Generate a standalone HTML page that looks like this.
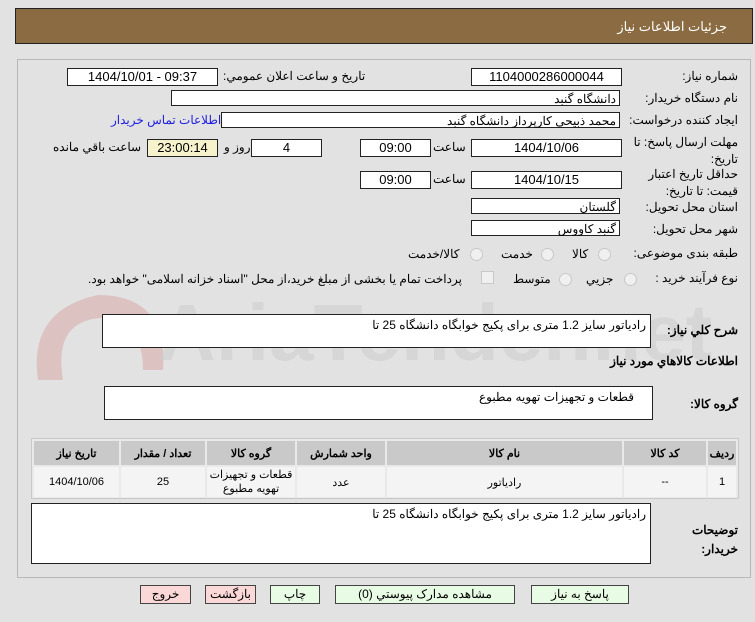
<!DOCTYPE html>
<html><head><meta charset="utf-8">
<style>
body{margin:0;width:755px;height:622px;background:#e2e2e2;font-family:"Liberation Sans","Noto Sans CJK SC",sans-serif;font-size:12px;color:#000;position:relative;overflow:hidden}
.a{position:absolute}
.hdr{left:15px;top:8px;width:736px;height:34px;background:#8b6b41;border:1px solid #222}
.hdr span{position:absolute;right:25px;top:10px;color:#fff;font-size:13px}
.panel{left:17px;top:59px;width:732px;height:517px;border:1px solid #b8b8b8;background:#e2e2e2}
.box{position:absolute;background:#fff;border:1px solid #222;height:16px;line-height:16px;text-align:center;font-size:13px}
.r{text-align:right;padding-right:3px;box-sizing:border-box;direction:rtl;font-size:12px}
.lbl{position:absolute;direction:rtl;text-align:right;white-space:nowrap}
.rad{position:absolute;width:11px;height:11px;border-radius:50%;border:1px solid #c8c8c8;background:#f0f0f0}
.ta{position:absolute;background:#fff;border:1px solid #222;direction:rtl;text-align:right;padding:3px 4px;box-sizing:border-box}
table{border-collapse:separate;border-spacing:2px;font-size:11px}
th{background:#c9c9c9;height:22px;font-weight:bold}
td{background:#f4f4f4;text-align:center;height:26px}
.btn{position:absolute;top:585px;height:17px;border:1px solid #444;background:#e8fbe4;text-align:center;line-height:17px;font-size:12px;direction:rtl}
</style></head><body>
<div class="a hdr"><span>جزئیات اطلاعات نیاز</span></div>
<div class="a panel"></div>
<svg class="a" style="left:18px;top:250px" width="720" height="150"><g fill="#d9a8a8" opacity="0.55"><path d="M20 130 Q10 60 80 45 Q150 45 145 120 L125 120 Q125 70 82 68 Q35 72 45 130 Z"/></g><text x="140" y="110" font-size="80" font-family="Liberation Sans" font-weight="bold" fill="#cfcfcf" opacity="0.6">AriaTender.net</text></svg>

<div class="lbl" style="right:17px;top:69px">شماره نیاز:</div>
<div class="box" style="left:471px;top:68px;width:149px">1104000286000044</div>
<div class="lbl" style="left:223px;top:69px">تاريخ و ساعت اعلان عمومي:</div>
<div class="box" style="left:67px;top:68px;width:149px">1404/10/01 - 09:37</div>

<div class="lbl" style="right:17px;top:91px">نام دستگاه خریدار:</div>
<div class="box r" style="left:171px;top:90px;width:449px">دانشگاه گنبد</div>

<div class="lbl" style="right:17px;top:113px">ایجاد کننده درخواست:</div>
<div class="box r" style="left:221px;top:112px;width:399px">محمد ذبیحی کارپرداز دانشگاه گنبد</div>
<div class="lbl" style="left:111px;top:113px;color:#2020e0">اطلاعات تماس خریدار</div>

<div class="lbl" style="right:17px;top:134px;line-height:17px">مهلت ارسال پاسخ: تا<br>تاریخ:</div>
<div class="box" style="left:471px;top:139px;width:149px">1404/10/06</div>
<div class="lbl" style="left:433px;top:140px">ساعت</div>
<div class="box" style="left:360px;top:139px;width:69px">09:00</div>
<div class="box" style="left:251px;top:139px;width:69px">4</div>
<div class="lbl" style="left:224px;top:140px">روز و</div>
<div class="box" style="left:147px;top:139px;width:69px;background:#f5f2cc">23:00:14</div>
<div class="lbl" style="left:53px;top:140px">ساعت باقي مانده</div>

<div class="lbl" style="right:17px;top:166px;line-height:17px">حداقل تاریخ اعتبار<br>قیمت: تا تاریخ:</div>
<div class="box" style="left:471px;top:171px;width:149px">1404/10/15</div>
<div class="lbl" style="left:433px;top:172px">ساعت</div>
<div class="box" style="left:360px;top:171px;width:69px">09:00</div>

<div class="lbl" style="right:17px;top:200px">استان محل تحویل:</div>
<div class="box r" style="left:471px;top:198px;width:149px">گلستان</div>
<div class="lbl" style="right:17px;top:222px">شهر محل تحویل:</div>
<div class="box r" style="left:471px;top:220px;width:149px">گنبد کاووس</div>

<div class="lbl" style="right:17px;top:246px">طبقه بندی موضوعی:</div>
<div class="rad" style="left:598px;top:248px"></div><div class="lbl" style="left:572px;top:247px">کالا</div>
<div class="rad" style="left:541px;top:248px"></div><div class="lbl" style="left:501px;top:247px">خدمت</div>
<div class="rad" style="left:470px;top:248px"></div><div class="lbl" style="left:408px;top:247px">کالا/خدمت</div>

<div class="lbl" style="right:17px;top:271px">نوع فرآیند خرید :</div>
<div class="rad" style="left:624px;top:273px"></div><div class="lbl" style="left:586px;top:272px">جزیي</div>
<div class="rad" style="left:559px;top:273px"></div><div class="lbl" style="left:513px;top:272px">متوسط</div>
<div class="a" style="left:481px;top:271px;width:11px;height:11px;border:1px solid #c8c8c8;background:#f0f0f0"></div>
<div class="lbl" style="left:88px;top:272px">پرداخت تمام یا بخشی از مبلغ خرید،از محل "اسناد خزانه اسلامی" خواهد بود.</div>

<div class="lbl" style="right:17px;top:323px;font-weight:bold">شرح کلي نیاز:</div>
<div class="ta" style="left:102px;top:314px;width:549px;height:34px">رادیاتور سایز 1.2 متری برای پکیج خوابگاه دانشگاه 25 تا</div>
<div class="lbl" style="right:17px;top:354px;font-weight:bold">اطلاعات کالاهاي مورد نیاز</div>
<div class="lbl" style="right:17px;top:397px;font-weight:bold">گروه کالا:</div>
<div class="ta" style="left:104px;top:386px;width:549px;height:34px;padding-right:18px">قطعات و تجهیزات تهویه مطبوع</div>

<div class="a" style="left:31px;top:438px;width:706px;height:59px;border:1px solid #c8c8c8;background:#e9e9e9">
<table style="direction:rtl;width:706px">
<tr><th style="width:26px">ردیف</th><th style="width:80px">کد کالا</th><th style="width:233px">نام کالا</th><th style="width:86px">واحد شمارش</th><th style="width:86px">گروه کالا</th><th style="width:82px">تعداد / مقدار</th><th>تاریخ نیاز</th></tr>
<tr><td>1</td><td>--</td><td>رادیاتور</td><td>عدد</td><td style="line-height:14px;font-size:11px">قطعات و تجهیزات<br>تهویه مطبوع</td><td>25</td><td>1404/10/06</td></tr>
</table></div>

<div class="lbl" style="right:17px;top:521px;font-weight:bold;line-height:19px">توضیحات<br>خریدار:</div>
<div class="ta" style="left:31px;top:503px;width:620px;height:61px">رادیاتور سایز 1.2 متری برای پکیج خوابگاه دانشگاه 25 تا</div>

<div class="btn" style="left:531px;width:96px">پاسخ به نیاز</div>
<div class="btn" style="left:335px;width:178px">مشاهده مدارک پیوستي (0)</div>
<div class="btn" style="left:270px;width:48px">چاپ</div>
<div class="btn" style="left:205px;width:49px;background:#fbd8d8">بازگشت</div>
<div class="btn" style="left:140px;width:49px;background:#fbd8d8">خروج</div>
</body></html>
